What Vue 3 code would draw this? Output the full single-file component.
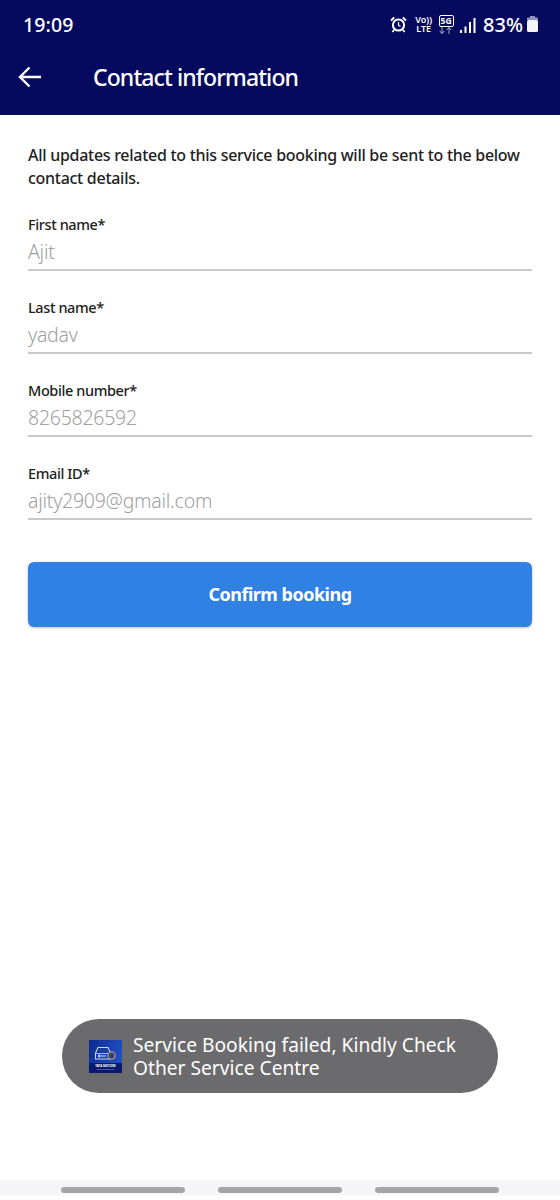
<script setup>
const fields = [
  { label: 'First name*', value: 'Ajit' },
  { label: 'Last name*', value: 'yadav' },
  { label: 'Mobile number*', value: '8265826592' },
  { label: 'Email ID*', value: 'ajity2909@gmail.com' },
]
</script>

<template>
  <div class="screen">
    <header class="header">
      <div class="status">
        <span class="time">19:09</span>
        <div class="status-icons">
          <svg class="alarm" width="17" height="17" viewBox="0 0 17 17">
            <circle cx="8.5" cy="9" r="5.6" fill="none" stroke="#fff" stroke-width="2" />
            <path d="M8.5 6v3.2l2 1.4" fill="none" stroke="#fff" stroke-width="1.2" />
            <path d="M1 4.5 4.2 1.5M16 4.5l-3.2-3M4 14l-1.6 2M13 14l1.6 2" stroke="#fff" stroke-width="1.8" fill="none" />
          </svg>
          <div class="volte"><span>Vo))</span><span>LTE</span></div>
          <div class="fiveg">
            <span class="fiveg-box">5G</span>
            <svg width="16" height="7" viewBox="0 0 16 7">
              <path d="M4 0v6M1.8 4 4 6.5 6.2 4" stroke="#8f93b8" stroke-width="1.1" fill="none" />
              <path d="M11 7V1M8.8 3 11 .5 13.2 3" stroke="#8f93b8" stroke-width="1.1" fill="none" />
            </svg>
          </div>
          <svg class="signal" width="16" height="17" viewBox="0 0 16 17">
            <rect x="0" y="13" width="2" height="3" fill="#fff" />
            <rect x="4.5" y="9.5" width="2" height="6.5" fill="#fff" />
            <rect x="9" y="5" width="2" height="11" fill="#fff" />
            <rect x="13.5" y="1" width="2" height="15" fill="#fff" />
          </svg>
          <span class="battery-text">83%</span>
          <svg class="battery" width="11" height="16" viewBox="0 0 11 16">
            <rect x="3" y="0" width="5" height="2" fill="#8f93b8" />
            <rect x="0" y="1.5" width="11" height="3" rx="1" fill="#8f93b8" />
            <rect x="0" y="4" width="11" height="12" rx="1.5" fill="#f4f4f8" />
          </svg>
        </div>
      </div>
      <div class="appbar">
        <svg class="back" width="24" height="22" viewBox="0 0 24 22">
          <path d="M23 11H2.5M11.5 1.5 2 11l9.5 9.5" fill="none" stroke="#fff" stroke-width="2.4" />
        </svg>
        <h1 class="title">Contact information</h1>
      </div>
    </header>

    <main class="content">
      <p class="intro">All updates related to this service booking will be sent to the below contact details.</p>
      <div class="field" v-for="f in fields" :key="f.label">
        <div class="label">{{ f.label }}</div>
        <div class="value">{{ f.value }}</div>
      </div>
      <button class="confirm" type="button">Confirm booking</button>
    </main>

    <div class="toast">
      <svg class="logo" width="33" height="33" viewBox="0 0 33 33">
        <defs>
          <linearGradient id="logo-bg" x1="0" y1="0" x2="1" y2="0.4">
            <stop offset="0" stop-color="#0d2a8f" />
            <stop offset="1" stop-color="#1f4fc0" />
          </linearGradient>
        </defs>
        <rect width="33" height="33" fill="url(#logo-bg)" />
        <rect y="23" width="33" height="10" fill="#0a1a6e" />
        <path d="M6.5 19v-6l2.5-5.5h10l2.5 5.5v6z" fill="none" stroke="#c6d3f2" stroke-width="1.1" />
        <path d="M7 13.5h13" stroke="#c6d3f2" stroke-width=".8" />
        <path d="M9 16h8M9 16l2-1.5M9 16l2 1.5" stroke="#fff" stroke-width=".9" fill="none" />
        <circle cx="22.5" cy="15.5" r="3.6" fill="#30407e" stroke="#b78f78" stroke-width="1.4" />
        <text x="16.5" y="26.5" class="logo-text">TATA MOTORS</text>
        <text x="16.5" y="30" class="logo-sub">SERVICE CENTRE</text>
      </svg>
      <span class="toast-text">Service Booking failed, Kindly Check Other Service Centre</span>
    </div>

    <div class="navbar">
      <span class="pill"></span>
      <span class="pill"></span>
      <span class="pill"></span>
    </div>
  </div>
</template>

<style>
html, body { margin: 0; background: #fff; }
</style>

<style scoped>
.screen {
  position: relative;
  width: 560px;
  height: 1200px;
  overflow: hidden;
  background: #fff;
  display: flex;
  flex-direction: column;
  font-family: "Noto Sans", "Open Sans", sans-serif;
}
.header {
  background: #060a5e;
  height: 115px;
  flex: none;
  color: #fff;
}
.status {
  height: 50px;
  display: flex;
  align-items: center;
  justify-content: space-between;
  padding: 0 22px 2px 23px;
  box-sizing: border-box;
}
.time { font-size: 19.5px; font-weight: 500; letter-spacing: 0.1px; }
.status-icons { display: flex; align-items: center; }
.alarm { margin-right: 8px; }
.volte {
  display: flex;
  flex-direction: column;
  font-size: 9px;
  line-height: 9px;
  font-weight: 600;
  align-items: center;
  margin-right: 6px;
}
.fiveg { display: flex; flex-direction: column; align-items: center; margin-right: 6px; }
.fiveg-box {
  font-size: 8.5px;
  line-height: 10px;
  font-weight: 700;
  border: 1px solid #fff;
  border-radius: 2px;
  padding: 0 1px;
}
.signal { margin-right: 7px; margin-top: 2px; }
.battery-text { font-size: 20px; font-weight: 500; margin-right: 4px; }
.appbar { display: flex; align-items: center; height: 56px; padding-left: 18px; margin-top: -1px; }
.back { margin-right: 51px; }
.title { margin: 0; font-size: 23px; font-weight: 500; letter-spacing: -0.9px; }
.content { padding: 29px 28px 0 28px; display: flex; flex-direction: column; color: #222; }
.intro { margin: 0 0 23px; font-size: 16px; font-weight: 500; line-height: 23px; letter-spacing: -0.28px; }
.field { border-bottom: 2px solid #c9c9c9; height: 56px; margin-bottom: 25px; }
.label { font-size: 14.5px; font-weight: 500; line-height: 20px; margin-top: 1px; letter-spacing: -0.4px; }
.value { font-size: 19.5px; line-height: 27px; margin-top: 4px; color: #a0a0a0; font-weight: 300; letter-spacing: -0.25px; }
.confirm {
  margin-top: 17px;
  height: 65px;
  padding: 0 0 2px;
  border: none;
  border-radius: 6px;
  background: #3180e4;
  color: #fff;
  font: 700 18px "Noto Sans", "Open Sans", sans-serif;
  letter-spacing: -0.5px;
  box-shadow: 0 1px 3px rgba(0, 0, 0, 0.25);
}
.toast {
  position: absolute;
  left: 62px;
  top: 1019px;
  width: 436px;
  height: 74px;
  border-radius: 37px;
  background: #6b6b6d;
  display: flex;
  align-items: center;
  padding: 0 30px 0 27px;
  box-sizing: border-box;
  color: #fff;
}
.logo { flex: none; margin-right: 11px; }
.logo-text { font-size: 3px; font-weight: 700; fill: #fff; text-anchor: middle; font-family: "Noto Sans", sans-serif; }
.logo-sub { font-size: 2.2px; fill: #aab6e0; text-anchor: middle; font-family: "Noto Sans", sans-serif; }
.toast-text { font-size: 19.2px; line-height: 23px; }
.navbar {
  position: absolute;
  left: 0;
  right: 0;
  top: 1180px;
  height: 15px;
  box-sizing: border-box;
  padding: 7px 0 0 61px;
  background: #f5f5f9;
  display: flex;
  align-items: flex-start;
  gap: 33px;
}
.pill { width: 124px; height: 6px; border-radius: 3px; background: #a5a5a5; }
</style>
